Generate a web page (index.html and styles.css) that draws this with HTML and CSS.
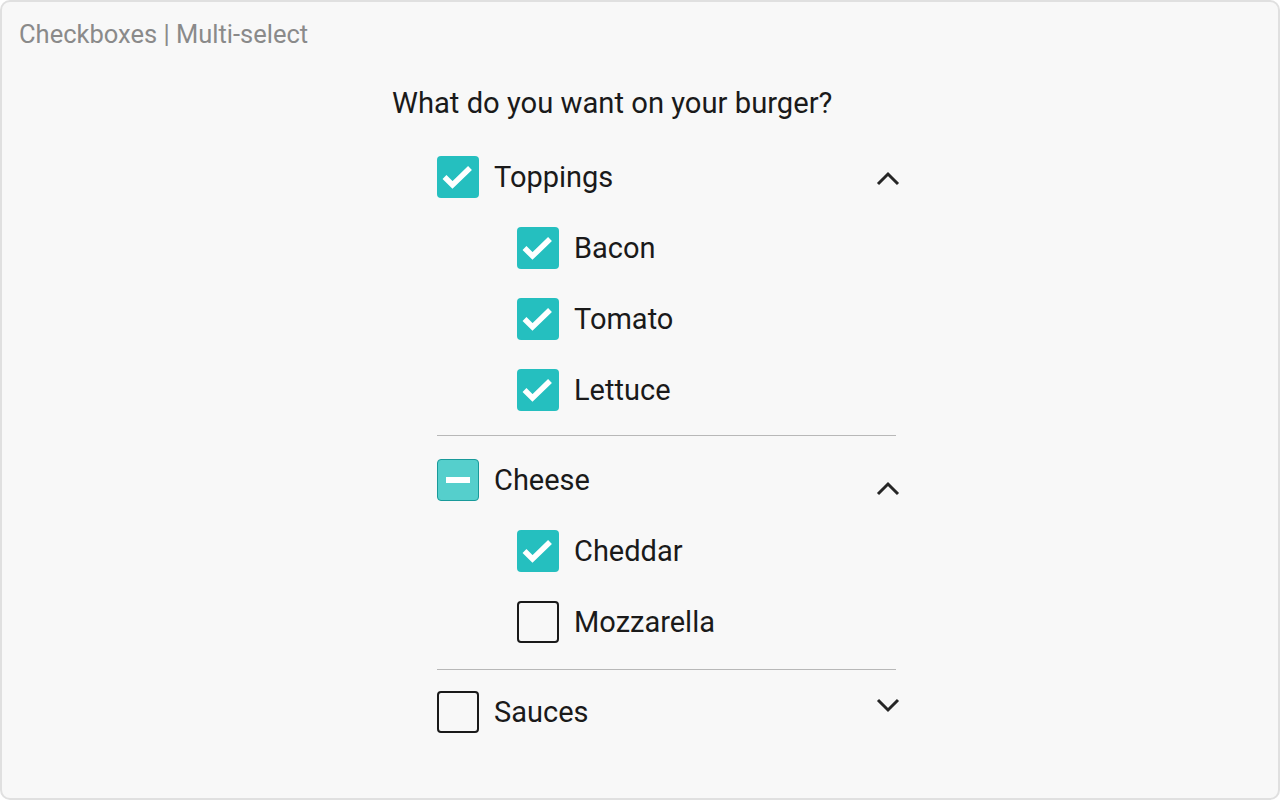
FILE: index.html
```html
<!DOCTYPE html>
<html>
<head>
<meta charset="utf-8">
<link rel="stylesheet" href="styles.css">
</head>
<body>
<div class="frame">
  <div class="title">Checkboxes | Multi-select</div>
  <div class="panel">
    <div class="question">What do you want on your burger?</div>
    <div class="list">
      <div class="group">
        <div class="row parent">
          <span class="box checked"><svg viewBox="0 0 42 42"><polyline points="7.5,21 15.5,29 33,12" /></svg></span>
          <span class="label">Toppings</span>
          <svg class="chev" viewBox="0 0 24 16"><polyline points="2,13 12,3 22,13" /></svg>
        </div>
        <div class="row child">
          <span class="box checked"><svg viewBox="0 0 42 42"><polyline points="7.5,21 15.5,29 33,12" /></svg></span>
          <span class="label">Bacon</span>
        </div>
        <div class="row child">
          <span class="box checked"><svg viewBox="0 0 42 42"><polyline points="7.5,21 15.5,29 33,12" /></svg></span>
          <span class="label">Tomato</span>
        </div>
        <div class="row child">
          <span class="box checked"><svg viewBox="0 0 42 42"><polyline points="7.5,21 15.5,29 33,12" /></svg></span>
          <span class="label">Lettuce</span>
        </div>
      </div>
      <div class="divider"></div>
      <div class="group">
        <div class="row parent">
          <span class="box mixed"><span class="dash"></span></span>
          <span class="label">Cheese</span>
          <svg class="chev chev-low" viewBox="0 0 24 16"><polyline points="2,13 12,3 22,13" /></svg>
        </div>
        <div class="row child">
          <span class="box checked"><svg viewBox="0 0 42 42"><polyline points="7.5,21 15.5,29 33,12" /></svg></span>
          <span class="label">Cheddar</span>
        </div>
        <div class="row child">
          <span class="box"></span>
          <span class="label">Mozzarella</span>
        </div>
      </div>
      <div class="divider divider-b"></div>
      <div class="group">
        <div class="row parent">
          <span class="box"></span>
          <span class="label">Sauces</span>
          <svg class="chev chev-high" viewBox="0 0 24 16"><polyline points="2,3 12,13 22,3" /></svg>
        </div>
      </div>
    </div>
  </div>
</div>
</body>
</html>
```

FILE: styles.css
```css
* { box-sizing: border-box; }
html, body {
  margin: 0;
  padding: 0;
  background: #ffffff;
}
body {
  font-family: Roboto, "Liberation Sans", Arial, sans-serif;
  color: #1a1a1a;
}
.frame {
  width: 1280px;
  height: 800px;
  border: 2px solid #e0e0e0;
  border-radius: 10px;
  background: #f8f8f8;
  overflow: hidden;
}
.title {
  font-size: 25.5px;
  color: #8a8a8a;
  padding: 16px 0 0 17px;
  line-height: 32px;
}
.panel {
  margin-left: 390px;
  width: 506px;
  padding-top: 35px;
}
.question {
  font-size: 29.2px;
  line-height: 36px;
  color: #1a1a1a;
}
.list {
  margin-left: 45px;
  margin-top: 20px;
}
.row {
  display: flex;
  align-items: center;
  height: 71px;
}
.child {
  padding-left: 80px;
}
.box {
  width: 42px;
  height: 42px;
  border-radius: 4px;
  border: 2px solid #1a1a1a;
  background: transparent;
  flex: none;
  display: flex;
  align-items: center;
  justify-content: center;
}
.box.checked {
  background: #25bfbf;
  border: none;
}
.box.checked svg {
  width: 42px;
  height: 42px;
}
.box.checked polyline {
  fill: none;
  stroke: #ffffff;
  stroke-width: 5.5;
  stroke-linecap: butt;
  stroke-linejoin: miter;
}
.box.mixed {
  background: #55cfcc;
  border: 1.5px solid #199a9a;
}
.dash {
  width: 24px;
  height: 6px;
  background: #ffffff;
}
.label {
  font-size: 29px;
  margin-left: 15px;
  color: #1a1a1a;
}
.chev {
  width: 24px;
  height: 16px;
  margin-left: auto;
  margin-right: -2px;
  margin-top: 4px;
}
.chev polyline {
  fill: none;
  stroke: #262626;
  stroke-width: 3;
}
.chev-low { margin-top: 18px; }
.chev-high { margin-top: 0; margin-bottom: 14px; }
.divider {
  height: 1px;
  width: 459px;
  background: #b8b8b8;
  margin: 10px 0 8px 0;
}
.divider-b {
  margin: 12px 0 6px 0;
}
```
